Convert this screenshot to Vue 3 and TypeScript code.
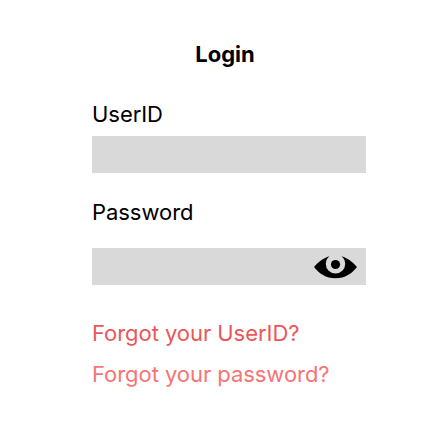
<script setup lang="ts">
import { ref } from 'vue'

const userId = ref('')
const password = ref('')
const visible = ref(false)
</script>

<template>
  <main class="screen">
    <form class="login" @submit.prevent>
      <h1 class="title">Login</h1>
      <label class="label" for="user-id">UserID</label>
      <div class="field">
        <input id="user-id" v-model="userId" class="input" type="text" />
      </div>
      <label class="label password-label" for="password">Password</label>
      <div class="field">
        <input id="password" v-model="password" class="input" :type="visible ? 'text' : 'password'" />
        <button class="toggle" type="button" aria-label="Show password" @click="visible = !visible">
          <svg class="eye" width="43" height="23" viewBox="0 0 43 23">
            <path d="M0 12C3.500 7.500 9 3.200 15.500 1.200C13.200 3 11.800 5.600 11.800 9.100A9.700 9.300 0 0 0 31.200 9.100C31.200 5.600 29.800 3 27.500 1.200C34 3.200 39.500 7.500 43 12C38 18.500 31 23.300 21.500 23.300S5 18.500 0 12Z" />
            <circle cx="21.500" cy="9.500" r="4.600" />
          </svg>
        </button>
      </div>
      <a class="link link-user" href="#">Forgot your UserID?</a>
      <a class="link link-password" href="#">Forgot your password?</a>
    </form>
  </main>
</template>

<style>
body {
  margin: 0;
  background: #fff;
}
</style>

<style scoped>
.screen {
  box-sizing: border-box;
  height: 443px;
  padding: 41px 77px 0 92px;
  font-family: Inter, sans-serif;
  font-size: 22px;
  font-weight: 400;
  line-height: 27px;
  letter-spacing: -0.05px;
  color: #000;
}
.login {
  display: flex;
  flex-direction: column;
}
.title {
  margin: 0 0 33px;
  padding-right: 8px;
  font-size: 22px;
  font-weight: 700;
  letter-spacing: 0;
  text-align: center;
}
.label {
  margin-bottom: 8px;
}
.password-label {
  margin: 26px 0 22px;
}
.field {
  display: flex;
  align-items: center;
  height: 37px;
  background: #d9d9d9;
}
.input {
  flex: 1;
  min-width: 0;
  height: 100%;
  padding: 0 10px;
  border: 0;
  outline: 0;
  background: transparent;
  font: inherit;
}
.toggle {
  margin-right: 9px;
  padding: 0;
  border: 0;
  background: transparent;
  color: #000;
}
.eye {
  display: block;
  overflow: visible;
  fill: currentColor;
}
.link {
  align-self: flex-start;
  text-decoration: none;
  white-space: nowrap;
}
.link-user {
  margin-top: 35px;
  color: #eb5757;
}
.link-password {
  margin-top: 14px;
  color: #f77474;
}
</style>
